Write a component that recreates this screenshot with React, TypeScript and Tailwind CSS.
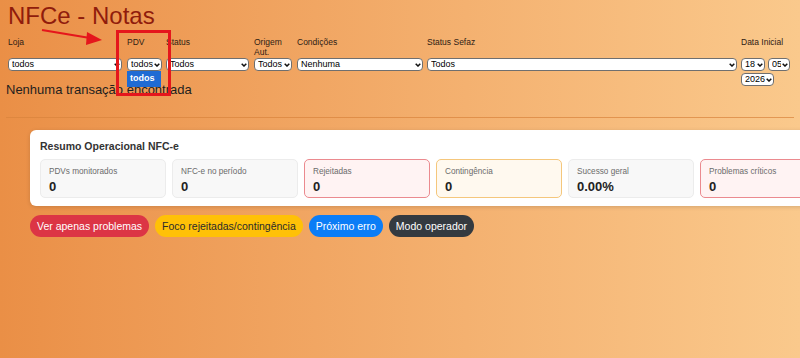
import React from "react";

type Stat = {
  label: string;
  value: string;
  tone: "gray" | "red" | "amber";
};

const stats: Stat[] = [
  { label: "PDVs monitorados", value: "0", tone: "gray" },
  { label: "NFC-e no período", value: "0", tone: "gray" },
  { label: "Rejeitadas", value: "0", tone: "red" },
  { label: "Contingência", value: "0", tone: "amber" },
  { label: "Sucesso geral", value: "0.00%", tone: "gray" },
  { label: "Problemas críticos", value: "0", tone: "red" },
];

const toneClass = {
  gray: "bg-[#f8f8f8] border-[#ececec]",
  red: "bg-[#fff3f3] border-[#eb8a8f]",
  amber: "bg-[#fff9ef] border-[#f5c77c]",
};

function Field({
  label,
  width,
  children,
}: {
  label: string;
  width: string;
  children: React.ReactNode;
}) {
  return (
    <div className={`flex flex-col ${width}`}>
      <label className="h-[20px] text-[8.5px] leading-[9.5px] text-[#2e2014] font-medium">
        {label}
      </label>
      <div className="flex flex-wrap gap-x-[3px] gap-y-[2px]">{children}</div>
    </div>
  );
}

function Select({ value, className }: { value: string; className: string }) {
  return (
    <span className={`relative block h-[13px] ${className}`}>
      <select
        defaultValue={value}
        className="block h-[13px] w-full appearance-none rounded-[4px] border border-[#6f6f6f] bg-white pl-[3px] pr-[8px] text-[9px] leading-[11px] text-black"
      >
        <option>{value}</option>
      </select>
      <svg
        className="pointer-events-none absolute right-[2.5px] top-[4.5px]"
        width="6"
        height="4"
        viewBox="0 0 6 4"
      >
        <path d="M0.7 0.7 L3 3 L5.3 0.7" fill="none" stroke="#111" strokeWidth="1.5" />
      </svg>
    </span>
  );
}

export default function App() {
  return (
    <div
      className="relative h-[358px] w-[800px] overflow-hidden bg-gradient-to-r from-[#ea8f46] to-[#fac98c] text-[#222]"
      style={{ fontFamily: '"Liberation Sans", Arial, sans-serif' }}
    >
      {/* Header */}
      <h1 className="pl-[8px] pt-[2px] text-[24px] leading-[28px] text-[#901c0c]">
        NFCe - Notas
      </h1>

      {/* Filters */}
      <div className="mt-[8px] flex gap-[4px] pl-[8px]">
        <Field label="Loja" width="w-[115px]">
          <Select value="todos" className="w-[114px]" />
        </Field>
        <Field label="PDV" width="w-[35px]">
          <Select value="todos" className="w-[35px]" />
        </Field>
        <Field label="Status" width="w-[84px]">
          <Select value="Todos" className="w-[83px]" />
        </Field>
        <Field label="Origem Aut." width="w-[39px]">
          <Select value="Todos" className="w-[38px]" />
        </Field>
        <Field label="Condições" width="w-[126px]">
          <Select value="Nenhuma" className="w-[126px]" />
        </Field>
        <Field label="Status Sefaz" width="w-[310px]">
          <Select value="Todos" className="w-[310px]" />
        </Field>
        <Field label="Data Inicial" width="w-[52px]">
          <Select value="18" className="w-[24px]" />
          <Select value="05" className="w-[22px]" />
          <Select value="2026" className="w-[33px]" />
        </Field>
      </div>

      <p className="-mt-[4px] pl-[6px] text-[13px] leading-[16px] text-[#1e1e1e]">
        Nenhuma transação encontrada
      </p>

      <hr className="mx-[6px] mt-[19px] border-t border-[#d9833c]/70" />

      {/* Summary card */}
      <section className="ml-[30px] mt-[12px] w-[806px] rounded-[6px] bg-white px-[10px] pb-[8px] pt-[9px] shadow-[0_1px_4px_rgba(0,0,0,0.15)]">
        <h2 className="text-[10.5px] font-bold leading-[14px] text-[#333]">
          Resumo Operacional NFC-e
        </h2>
        <div className="mt-[6px] grid grid-cols-[repeat(6,126px)] gap-[6px]">
          {stats.map((s) => (
            <div
              key={s.label}
              className={`h-[39px] rounded-[5px] border px-[8px] pt-[7px] ${toneClass[s.tone]}`}
            >
              <div className="text-[8.2px] leading-[10px] text-[#6b6b6b]">{s.label}</div>
              <div className="mt-[2px] text-[13px] font-bold leading-[16px] text-[#222]">
                {s.value}
              </div>
            </div>
          ))}
        </div>
      </section>

      {/* Actions */}
      <div className="ml-[30px] mt-[9px] flex gap-[6px] text-[10.5px] leading-[22px]">
        <button className="h-[22px] rounded-full bg-[#dc3545] px-[7px] text-white">
          Ver apenas problemas
        </button>
        <button className="h-[22px] rounded-full bg-[#ffc107] px-[7px] text-[#2b2b2b]">
          Foco rejeitadas/contingência
        </button>
        <button className="h-[22px] rounded-full bg-[#0b7df6] px-[7px] text-white">
          Próximo erro
        </button>
        <button className="h-[22px] rounded-full bg-[#343a40] px-[7px] text-white">
          Modo operador
        </button>
      </div>

      {/* Open dropdown list of the PDV select */}
      <div className="absolute left-[127px] top-[71px] flex h-[16px] w-[34px] items-center bg-[#1f6bd4] px-[3px] text-[9px] font-bold text-white">
        todos
      </div>

      {/* Annotation: arrow + highlight box */}
      <svg
        className="pointer-events-none absolute left-0 top-0"
        width="200"
        height="110"
        viewBox="0 0 200 110"
      >
        <line x1="42" y1="30" x2="90" y2="38" stroke="#e5161c" strokeWidth="2" />
        <polygon points="102,40 87,32 86,45" fill="#e5161c" />
        <rect x="117.5" y="31.5" width="52" height="63" fill="none" stroke="#e5161c" strokeWidth="3" />
      </svg>
    </div>
  );
}
